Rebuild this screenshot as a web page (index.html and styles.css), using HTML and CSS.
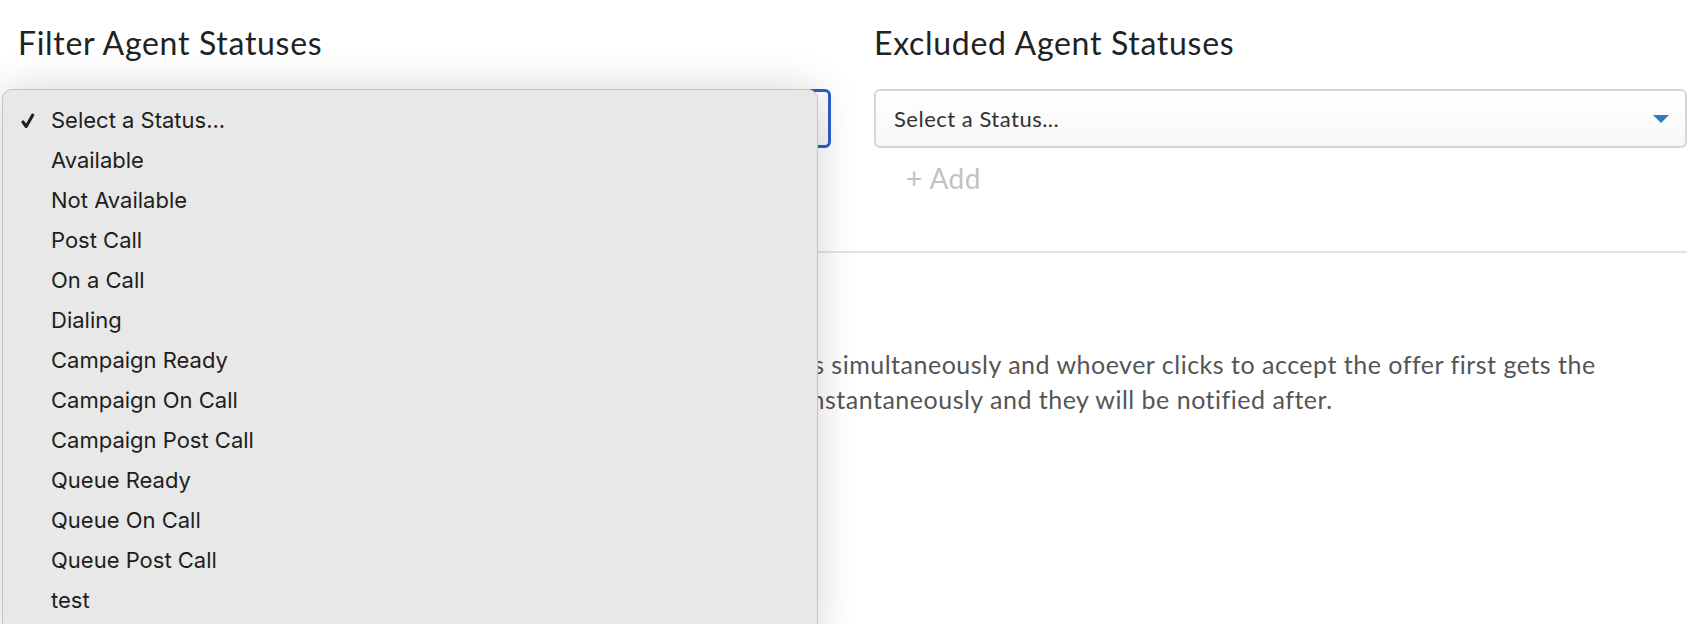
FILE: index.html
```html
<!DOCTYPE html>
<html>
<head lang="en">
    <meta charset="UTF-8">
    <title>Agent Statuses</title>
    <link rel="stylesheet" href="styles.css">
</head>
<body>
<div class="page">
    <div class="filters">
        <div class="field">
            <h2 class="field-title">Filter Agent Statuses</h2>
            <div class="select-wrap">
                <div class="select is-focused">
                    <span>Select a Status...</span>
                    <span class="caret"></span>
                </div>
                <ul class="menu">
                    <li class="checked">
                        <svg class="check" width="14" height="16" viewBox="0 0 14 16">
                            <path d="M2 9 L5.2 13.6 L11.6 2.2" fill="none" stroke="#1e1e1e" stroke-width="3.1" stroke-linecap="round" stroke-linejoin="round"/>
                        </svg>
                        Select a Status...
                    </li>
                    <li>Available</li>
                    <li>Not Available</li>
                    <li>Post Call</li>
                    <li>On a Call</li>
                    <li>Dialing</li>
                    <li>Campaign Ready</li>
                    <li>Campaign On Call</li>
                    <li>Campaign Post Call</li>
                    <li>Queue Ready</li>
                    <li>Queue On Call</li>
                    <li>Queue Post Call</li>
                    <li>test</li>
                </ul>
            </div>
        </div>
        <div class="field">
            <h2 class="field-title">Excluded Agent Statuses</h2>
            <div class="select">
                <span>Select a Status...</span>
                <span class="caret"></span>
            </div>
            <a class="add-link" href="#">+ Add</a>
        </div>
    </div>

    <div class="divider"></div>

    <h3 class="section-title">Ring All</h3>
    <p class="note">When ring all is turned on, the offer is presented to all available agents simultaneously and whoever clicks to accept the offer first gets the call. The offer is then withdrawn from the screens of all other agents instantaneously and they will be notified after.</p>
</div>
</body>
</html>
```

FILE: styles.css
```css
* {
    padding: 0;
    margin: 0;
    list-style: none;
    box-sizing: border-box;
}
html, body {
    height: 100%;
    overflow: hidden;
}
body {
    background-color: #fff;
    font-family: "Lato", "Noto Sans", sans-serif;
    color: #222;
}
.page {
    padding: 23px 13px 0 18px;
}
.filters {
    display: grid;
    grid-template-columns: 813px 813px;
    column-gap: 43px;
}
.field-title {
    font-size: 32px;
    font-weight: 400;
    line-height: 40px;
    letter-spacing: 0.7px;
    color: #222;
}
.select-wrap {
    position: relative;
}
.select {
    margin-top: 26px;
    height: 59px;
    padding: 0 16px 0 18px;
    display: flex;
    align-items: center;
    justify-content: space-between;
    border: 2px solid #d6d6d6;
    border-radius: 6px;
    background: linear-gradient(#fff, #f7f7f7);
    font-size: 22px;
    letter-spacing: 0.5px;
    color: #333;
}
.select.is-focused {
    border: 3px solid #2a5fcb;
}
.caret {
    width: 0;
    height: 0;
    border-left: 8px solid transparent;
    border-right: 8px solid transparent;
    border-top: 8px solid #357ab8;
}
.add-link {
    display: inline-block;
    margin: 12px 0 0 32px;
    font-size: 28px;
    line-height: 36px;
    letter-spacing: 0.5px;
    color: #c2c2c2;
    text-decoration: none;
}
.divider {
    margin-top: 55px;
    height: 2px;
    background-color: #e4e4e4;
}
.section-title {
    margin-top: 30px;
    font-size: 26px;
    font-weight: 400;
}
/* native popup list, drawn open over the first select */
.menu {
    position: absolute;
    left: -16px;
    top: 0;
    width: 816px;
    padding: 10px 0 20px;
    border: 1px solid #c4c4c4;
    border-radius: 10px;
    background-color: #e8e8e8;
    box-shadow: 0 0 40px rgba(0, 0, 0, 0.17);
    font-family: "Inter", "Noto Sans", sans-serif;
    font-size: 22px;
    color: #1e1e1e;
    z-index: 10;
}
.menu li {
    position: relative;
    height: 40px;
    line-height: 40px;
    padding-left: 48px;
}
.check {
    position: absolute;
    left: 18px;
    top: 13px;
}
.note {
    margin-top: 32px;
    max-width: 1607px;
    font-size: 25px;
    line-height: 35px;
    letter-spacing: 0.5px;
    color: #555;
}
```
